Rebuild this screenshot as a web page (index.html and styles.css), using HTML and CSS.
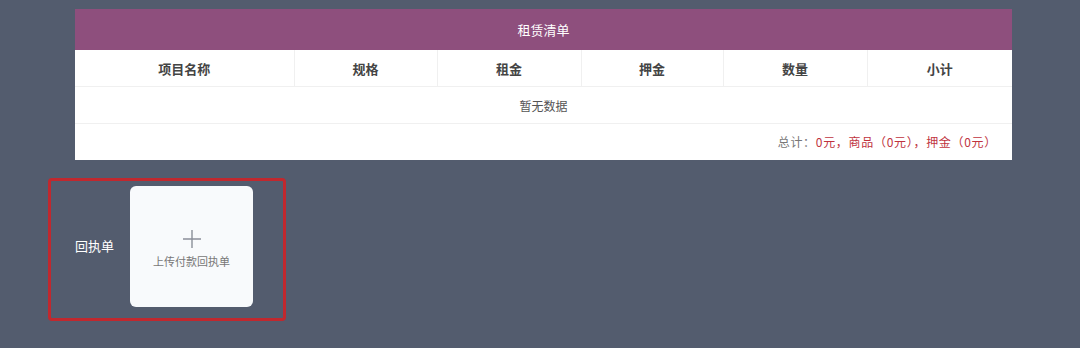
FILE: index.html
```html
<!DOCTYPE html>
<html lang="zh-CN">
<head>
    <meta charset="UTF-8">
    <title>租赁清单</title>
    <link rel="stylesheet" href="styles.css">
</head>
<body>
    <div class="page">
        <div class="lease">
            <div class="lease-title">租赁清单</div>
            <table class="lease-table">
                <colgroup>
                    <col style="width:219px">
                    <col style="width:143px">
                    <col style="width:144px">
                    <col style="width:142px">
                    <col style="width:144px">
                    <col style="width:145px">
                </colgroup>
                <thead>
                    <tr>
                        <th>项目名称</th>
                        <th>规格</th>
                        <th>租金</th>
                        <th>押金</th>
                        <th>数量</th>
                        <th>小计</th>
                    </tr>
                </thead>
                <tbody>
                    <tr>
                        <td colspan="6" class="empty">暂无数据</td>
                    </tr>
                </tbody>
            </table>
            <div class="total">
                总计：<span class="money">0元，商品（0元），押金（0元）</span>
            </div>
        </div>

        <div class="receipt">
            <span class="receipt-label">回执单</span>
            <div class="upload">
                <svg class="plus" width="20" height="20" viewBox="0 0 20 20">
                    <path d="M10 1v18M1 10h18" stroke="#8a8f99" stroke-width="1.4" fill="none"/>
                </svg>
                <span class="upload-text">上传付款回执单</span>
            </div>
        </div>
    </div>
</body>
</html>
```

FILE: styles.css
```css
body {
    margin: 0;
    background: #535c6e;
    font-family: "Noto Sans CJK SC", "Noto Sans", sans-serif;
    color: #444;
}
.page {
    padding: 9px 0 0 48px;
    width: 1032px;
    height: 339px;
}
.lease {
    margin-left: 27px;
    width: 937px;
    background: #fff;
}
.lease-title {
    height: 41px;
    line-height: 41px;
    background: #8e4f7d;
    color: #fff;
    text-align: center;
    font-size: 13px;
}
.lease-table {
    width: 937px;
    border-collapse: collapse;
    table-layout: fixed;
}
.lease-table th {
    height: 36px;
    padding: 0;
    font-size: 13px;
    font-weight: bold;
    color: #444;
    border-left: 1px solid #f0f0f0;
    border-bottom: 1px solid #f0f0f0;
}
.lease-table th:first-child {
    border-left: none;
}
.lease-table td.empty {
    height: 36px;
    padding: 0;
    text-align: center;
    font-size: 12px;
    color: #555;
    border-bottom: 1px solid #f0f0f0;
}
.total {
    height: 36px;
    line-height: 36px;
    text-align: right;
    padding-right: 15px;
    font-size: 12px;
    letter-spacing: 0.7px;
    color: #777;
}
.money {
    color: #c0333e;
}
.receipt {
    margin-top: 18px;
    width: 232px;
    height: 137px;
    border: 3px solid #c1282e;
    border-radius: 4px;
    display: flex;
    align-items: center;
}
.receipt-label {
    margin: -8px 0 0 24px;
    width: 55px;
    font-size: 13px;
    color: #fff;
}
.upload {
    width: 123px;
    height: 121px;
    margin-top: -6px;
    background: #f8fafc;
    border-radius: 6px;
    display: flex;
    flex-direction: column;
    align-items: center;
    justify-content: center;
}
.plus {
    margin-top: 4px;
}
.upload-text {
    margin-top: 4px;
    font-size: 11px;
    color: #777;
}
```
